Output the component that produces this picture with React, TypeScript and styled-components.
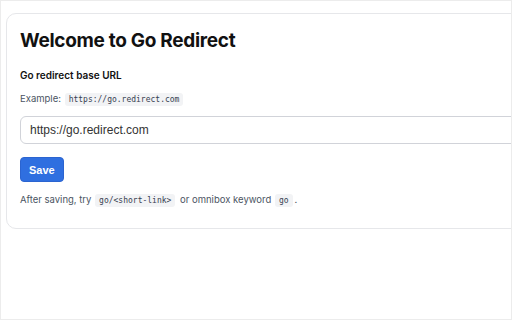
import React from 'react';
import styled, { createGlobalStyle } from 'styled-components';

const GlobalStyle = createGlobalStyle`
  html, body {
    margin: 0;
    padding: 0;
    background: #ffffff;
  }
`;

const Frame = styled.div`
  box-sizing: border-box;
  width: 512px;
  height: 320px;
  border: 1px solid #ececec;
  padding: 12px 0 0 5px;
  overflow: hidden;
  font-family: Inter, "Noto Sans", sans-serif;
`;

const Card = styled.section`
  box-sizing: border-box;
  width: 560px;
  border: 1px solid #e6e7ea;
  border-radius: 10px;
  padding: 15px 13px 21px 13px;
  background: #ffffff;
`;

const Title = styled.h1`
  margin: 0;
  font-size: 19px;
  line-height: 24px;
  font-weight: 700;
  color: #111111;
  letter-spacing: -0.3px;
`;

const Label = styled.label`
  display: block;
  margin-top: 15px;
  font-size: 10px;
  line-height: 14px;
  font-weight: 600;
  color: #111111;
`;

const Hint = styled.p<{ $gap: number }>`
  margin: ${(p) => p.$gap}px 0 0;
  font-size: 9.5px;
  line-height: 14px;
  color: #4b5563;
`;

const Code = styled.code`
  font-family: "DejaVu Sans Mono", "Liberation Mono", monospace;
  font-size: 8px;
  line-height: 10px;
  color: #374151;
  background: #f2f3f5;
  border-radius: 3px;
  padding: 2px 4px;
  margin: 0 2px 0 1px;
`;

const Input = styled.input`
  display: block;
  box-sizing: border-box;
  width: 100%;
  height: 28px;
  margin-top: 10px;
  padding: 0 9px;
  border: 1px solid #d1d3d9;
  border-radius: 6px;
  font-family: "Liberation Sans", Arial, sans-serif;
  font-size: 12px;
  color: #333333;
  background: #ffffff;
  outline: none;
`;

const SaveButton = styled.button`
  display: block;
  box-sizing: border-box;
  height: 25px;
  margin-top: 13px;
  padding: 0 8px;
  border: 1px solid #2b64d0;
  border-radius: 4px;
  background: #2f6fe0;
  color: #ffffff;
  font-family: "Liberation Sans", Arial, sans-serif;
  font-size: 11px;
  font-weight: 700;
`;

const App: React.FC = () => {
  return (
    <>
      <GlobalStyle />
      <Frame>
        <Card>
          <Title>Welcome to Go Redirect</Title>
          <Label htmlFor="base-url">Go redirect base URL</Label>
          <Hint $gap={10}>
            Example: <Code>https://go.redirect.com</Code>
          </Hint>
          <Input id="base-url" defaultValue="https://go.redirect.com" />
          <SaveButton>Save</SaveButton>
          <Hint $gap={11}>
            After saving, try <Code>go/&lt;short-link&gt;</Code> or omnibox keyword <Code>go</Code>.
          </Hint>
        </Card>
      </Frame>
    </>
  );
};

export default App;
